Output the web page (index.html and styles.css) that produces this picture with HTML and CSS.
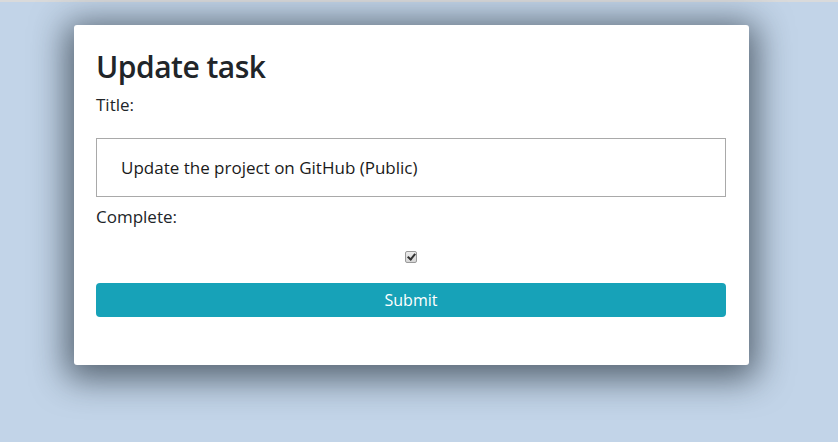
FILE: index.html
```html
<!DOCTYPE html>
<html lang="en">
<head>
<meta charset="utf-8">
<title>Update task</title>
<link rel="stylesheet" href="styles.css">
</head>
<body>
<div class="topbar"></div>
<main class="card">
  <h1 class="card-title">Update task</h1>
  <form class="form">
    <label class="label label-title" for="title">Title:</label>
    <input class="text-input" id="title" type="text" value="Update the project on GitHub (Public)">
    <label class="label label-complete" for="complete">Complete:</label>
    <div class="check-row"><input class="check" id="complete" type="checkbox" checked></div>
    <button class="submit" type="button">Submit</button>
  </form>
</main>
</body>
</html>
```

FILE: styles.css
```css
html, body {
  margin: 0;
  padding: 0;
}
body {
  background: #c2d4e8;
  height: 442px;
  overflow: hidden;
  font-family: "Open Sans", "Noto Sans", sans-serif;
  color: #212529;
}
.topbar {
  height: 2px;
  background: #d9dadb;
}
.card {
  box-sizing: border-box;
  width: 675px;
  margin: 23px 0 0 74px;
  padding: 22px 23px 48px 22px;
  background: #fff;
  border-radius: 3px;
  box-shadow: 0 6px 34px 8px rgba(20, 30, 40, 0.62);
}
.card-title {
  margin: 0;
  font-size: 30px;
  line-height: 40px;
  font-weight: 600;
  letter-spacing: -0.5px;
  color: #212529;
}
.form {
  display: flex;
  flex-direction: column;
}
.label {
  font-size: 17px;
  line-height: 24px;
  color: #212529;
}
.label-title {
  margin-top: 6px;
}
.text-input {
  box-sizing: border-box;
  margin-top: 21px;
  height: 59px;
  width: 100%;
  border: 1px solid #a9a9a9;
  border-radius: 0;
  padding: 0 24px;
  font-family: inherit;
  font-size: 17px;
  color: #1a1a1a;
  outline: none;
}
.label-complete {
  margin-top: 8px;
}
.check-row {
  display: flex;
  justify-content: center;
  margin-top: 22px;
  height: 13px;
}
.check {
  -webkit-appearance: none;
  appearance: none;
  position: relative;
  box-sizing: border-box;
  margin: 0;
  width: 12px;
  height: 12px;
  border: 1px solid #9a9a9a;
  border-radius: 2px;
  background: linear-gradient(#ececec, #d6d6d6);
}
.check::after {
  content: "";
  position: absolute;
  left: 3px;
  top: 0px;
  width: 3px;
  height: 6px;
  border: solid #333;
  border-width: 0 2px 2px 0;
  transform: rotate(40deg);
}
.submit {
  margin-top: 19px;
  height: 34px;
  width: 100%;
  border: none;
  border-radius: 4px;
  background: #17a2b8;
  color: #fff;
  font-family: inherit;
  font-size: 16px;
  cursor: pointer;
}
```
